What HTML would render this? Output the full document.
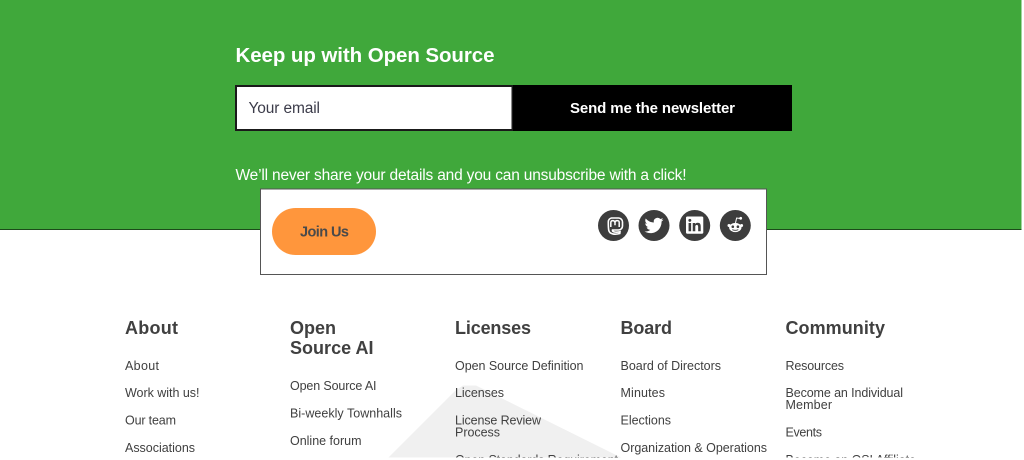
<!DOCTYPE html>
<html lang="en"><head><meta charset="utf-8"><title>Keep up with Open Source</title>
<style>
html,body{margin:0;padding:0;background:#fff;width:1024px;height:460px;overflow:hidden}
svg{display:block;position:absolute;left:0;top:0}
text{font-family:"Liberation Sans",sans-serif;white-space:pre}
.h{font-size:18px;font-weight:700;fill:#404040}
.l{font-size:12.5px;fill:#404040}
</style></head><body>
<svg width="1024" height="460" viewBox="0 0 1024 460" xmlns="http://www.w3.org/2000/svg">
<rect x="0" y="0" width="1021.5" height="229" fill="#40a83b"/>
<rect x="0" y="229" width="1021.5" height="1" fill="#1c4a1a"/>
<text x="235.5" y="62" font-size="20.5" font-weight="700" fill="#fff" textLength="259">Keep up with Open Source</text>
<rect x="236" y="86" width="276.5" height="44" fill="#fff" stroke="#1a1a1a" stroke-width="2"/>
<text x="248.5" y="113" font-size="15.5" fill="#3c3c4a" textLength="71.5">Your email</text>
<rect x="513" y="85" width="279" height="46" fill="#000"/>
<text x="570" y="113" font-size="15" font-weight="700" fill="#fff" textLength="165">Send me the newsletter</text>
<text x="235.5" y="180" font-size="15.5" fill="#fff" textLength="451">We’ll never share your details and you can unsubscribe with a click!</text>

<rect x="260.5" y="189" width="506" height="85.5" fill="#fff" stroke="#555" stroke-width="1"/>
<rect x="272" y="208" width="104" height="47" rx="23.5" fill="#ff963c"/>
<text x="300" y="236.5" font-size="14.5" font-weight="700" fill="#4a4a4a" textLength="49">Join Us</text>

<circle cx="613.5" cy="225.5" r="15.5" fill="#3d3d3d"/>
<circle cx="654" cy="225.5" r="15.5" fill="#3d3d3d"/>
<circle cx="694.7" cy="225.5" r="15.5" fill="#3d3d3d"/>
<circle cx="735.3" cy="225.5" r="15.5" fill="#3d3d3d"/>
<!-- mastodon -->
<path d="M611.5 218h7a4 4 0 0 1 4 4v4a4 4 0 0 1-4 4h-6c-.4 2 3 2.700 7.500 1.800l-.2 1.700c-5 1.300-10 .8-11-3-.5-2-.5-5-.5-8.500a4 4 0 0 1 3.200-4z" fill="none" stroke="#fff" stroke-width="1.600"/>
<path d="M610.800 227v-4.200q0-2.200 2-2.200t2.200 2.200v2.400m0-2.400q0-2.200 2.200-2.200t2 2.200v4.200" fill="none" stroke="#fff" stroke-width="1.500"/>
<!-- twitter -->
<g transform="translate(644.5 216) scale(.79)"><path fill="#fff" d="M23.95 4.57a10 10 0 01-2.82.78 4.96 4.96 0 002.16-2.72c-.95.55-2 .95-3.12 1.18a4.92 4.92 0 00-8.38 4.48C7.69 8.09 4.07 6.13 1.64 3.16a4.82 4.82 0 00-.67 2.48c0 1.71.87 3.21 2.19 4.1a4.9 4.9 0 01-2.23-.62v.06a4.92 4.92 0 003.95 4.83 5 5 0 01-2.21.08 4.94 4.94 0 004.6 3.42A9.87 9.87 0 010 19.54a14 14 0 007.56 2.21c9.05 0 14-7.5 14-13.98 0-.21 0-.42-.02-.63a9.94 9.94 0 002.46-2.55z"/></g>
<!-- linkedin -->
<g transform="translate(686 216.5) scale(.72)"><path fill="#fff" d="M20.447 20.452h-3.554v-5.569c0-1.328-.027-3.037-1.852-3.037-1.853 0-2.136 1.445-2.136 2.939v5.667H9.351V9h3.414v1.561h.046c.477-.9 1.637-1.85 3.37-1.85 3.601 0 4.267 2.37 4.267 5.455v6.286zM5.337 7.433c-1.144 0-2.063-.926-2.063-2.065 0-1.138.92-2.063 2.063-2.063 1.14 0 2.064.925 2.064 2.063 0 1.139-.925 2.065-2.064 2.065zm1.782 13.019H3.555V9h3.564v11.452zM22.225 0H1.771C.792 0 0 .774 0 1.729v20.542C0 23.227.792 24 1.771 24h20.451C23.2 24 24 23.227 24 22.271V1.729C24 .774 23.2 0 22.222 0h.003z"/></g>
<!-- reddit -->
<ellipse cx="735.3" cy="227.500" rx="6.200" ry="4.600" fill="#fff"/>
<circle cx="729" cy="225.500" r="1.500" fill="#fff"/><circle cx="741.600" cy="225.500" r="1.500" fill="#fff"/>
<circle cx="740.700" cy="218.300" r="1.400" fill="#fff"/>
<path d="M735.500 223l1.100-5 4 .5" fill="none" stroke="#fff" stroke-width="1"/>
<circle cx="732.800" cy="226.700" r="1.300" fill="#3d3d3d"/><circle cx="737.900" cy="226.700" r="1.300" fill="#3d3d3d"/>
<path d="M732.300 229.600q3 1.500 6 0" fill="none" stroke="#3d3d3d" stroke-width=".9"/>

<!-- footer watermark -->
<polygon points="388,458 455,391 463,385.500 476,385.500 622,458" fill="#f0f0f0"/>

<text class="h" x="125" y="334" textLength="53">About</text>
<text class="l" x="125" y="370" textLength="34">About</text>
<text class="l" x="125" y="397" textLength="74.500">Work with us!</text>
<text class="l" x="125" y="424.500" textLength="51">Our team</text>
<text class="l" x="125" y="452" textLength="70">Associations</text>

<text class="h" x="290" y="334" textLength="46">Open</text>
<text class="h" x="290" y="354" textLength="83.500">Source AI</text>
<text class="l" x="290" y="390" textLength="86.500">Open Source AI</text>
<text class="l" x="290" y="417.500" textLength="112">Bi-weekly Townhalls</text>
<text class="l" x="290" y="445" textLength="71.500">Online forum</text>

<text class="h" x="455" y="334" textLength="76">Licenses</text>
<text class="l" x="455" y="370" textLength="128.500">Open Source Definition</text>
<text class="l" x="455" y="397" textLength="49">Licenses</text>
<text class="l" x="455" y="424.500" textLength="86">License Review</text>
<text class="l" x="455" y="436.500" textLength="45">Process</text>
<text class="l" x="455" y="464" textLength="163">Open Standards Requirement</text>

<text class="h" x="620.500" y="334" textLength="51.500">Board</text>
<text class="l" x="620.500" y="370" textLength="100.500">Board of Directors</text>
<text class="l" x="620.500" y="397" textLength="44.500">Minutes</text>
<text class="l" x="620.500" y="424.500" textLength="50.500">Elections</text>
<text class="l" x="620.500" y="452" textLength="146.500">Organization &amp; Operations</text>

<text class="h" x="785.500" y="334" textLength="99.500">Community</text>
<text class="l" x="785.500" y="370" textLength="58.500">Resources</text>
<text class="l" x="785.500" y="397" textLength="117.500">Become an Individual</text>
<text class="l" x="785.500" y="409" textLength="46.500">Member</text>
<text class="l" x="785.500" y="436.500" textLength="36.500">Events</text>
<text class="l" x="785.500" y="464" textLength="130.500">Become an OSI Affiliate</text>

<rect x="0" y="457.500" width="1024" height="3" fill="#fff"/>
</svg>
</body></html>
